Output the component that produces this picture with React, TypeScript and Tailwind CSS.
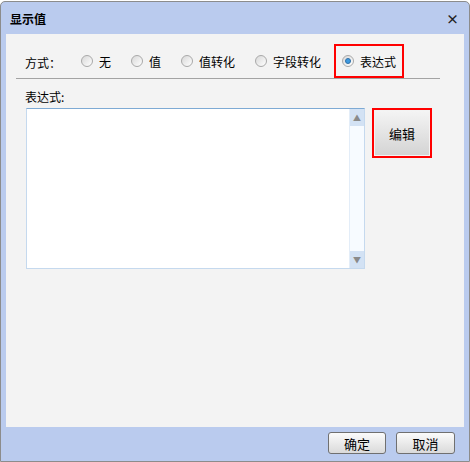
import React from 'react';

const font = { fontFamily: '"Noto Sans CJK SC", "Liberation Sans", sans-serif' };

const Radio = ({ checked }: { checked?: boolean }) => (
  <span className="relative flex h-[12px] w-[12px] items-center justify-center rounded-full border border-[#a9a9a9] bg-gradient-to-br from-[#d8d8d8] to-white">
    {checked && <span className="h-[6px] w-[6px] rounded-full border border-[#2f6fa6] bg-[#3d9ae0]" />}
  </span>
);

const Option = ({ label, checked, className }: { label: string; checked?: boolean; className?: string }) => (
  <label className={`flex items-center gap-[6px] ${className ?? ''}`}>
    <Radio checked={checked} />
    <span className="pt-[2px]">{label}</span>
  </label>
);

export default function App() {
  return (
    <div className="h-[462px] w-[470px] bg-white text-[12px] leading-none text-black" style={font}>
      <div className="mt-[1px] flex h-[461px] flex-col rounded-t-[5px] border border-[#8c8c8c] bg-[#bacbee]">
        {/* title bar */}
        <div className="flex h-[32px] items-center justify-between pl-[9px] pr-[10px]">
          <span className="pt-[2px] font-bold">显示值</span>
          <span className="pt-[1px] text-[13px] font-bold text-[#222]">×</span>
        </div>

        {/* content panel */}
        <div className="mx-[5px] h-[393px] bg-[#f3f3f3] pt-[10px]">
          <div className="ml-[10px] flex h-[35px] w-[424px] items-stretch border-b border-[#a3a3a3]">
            <div className="flex items-center pl-[9px]">
              <span className="w-[36px] pt-[4px]">方式：</span>
              <Option label="无" className="ml-[20px]" />
              <Option label="值" className="ml-[20px]" />
              <Option label="值转化" className="ml-[20px]" />
              <Option label="字段转化" className="ml-[20px]" />
            </div>
            <div className="ml-[13px] flex w-[70px] items-center border-2 border-[#f00] pl-[6px]">
              <Option label="表达式" checked />
            </div>
          </div>

          <div className="ml-[19px] mt-[12px]">表达式:</div>

          <div className="ml-[20px] mt-[5px] flex items-start gap-[7px]">
            <div className="flex h-[161px] w-[339px] border border-[#c5d9ee] border-t-[#7eaad4] bg-white">
              <div className="flex-1" />
              <div className="flex w-[15px] flex-col border-l border-[#e3edf8] bg-[#f7fbff]">
                <div className="flex h-[17px] items-center justify-center bg-[#d3e2f4] text-[8px] text-[#8a8a8a]">▲</div>
                <div className="flex-1" />
                <div className="flex h-[17px] items-center justify-center bg-[#d3e2f4] text-[8px] text-[#8a8a8a]">▼</div>
              </div>
            </div>
            <div className="h-[50px] w-[60px] border-2 border-[#f00] p-[1px]">
              <button className="flex h-full w-full items-center justify-center bg-gradient-to-b from-[#f4f4f4] to-[#d4d4d4] text-[13px]">
                编辑
              </button>
            </div>
          </div>
        </div>

        {/* footer */}
        <div className="flex flex-1 items-start justify-end gap-[10px] pr-[14px] pt-[5px]">
          <button className="flex h-[22px] w-[58px] items-center justify-center rounded-[3px] border border-[#707070] bg-gradient-to-b from-[#fbfbfb] to-[#dadada] text-[13px]">
            确定
          </button>
          <button className="flex h-[22px] w-[59px] items-center justify-center rounded-[3px] border border-[#707070] bg-gradient-to-b from-[#fbfbfb] to-[#dadada] text-[13px]">
            取消
          </button>
        </div>
      </div>
    </div>
  );
}
